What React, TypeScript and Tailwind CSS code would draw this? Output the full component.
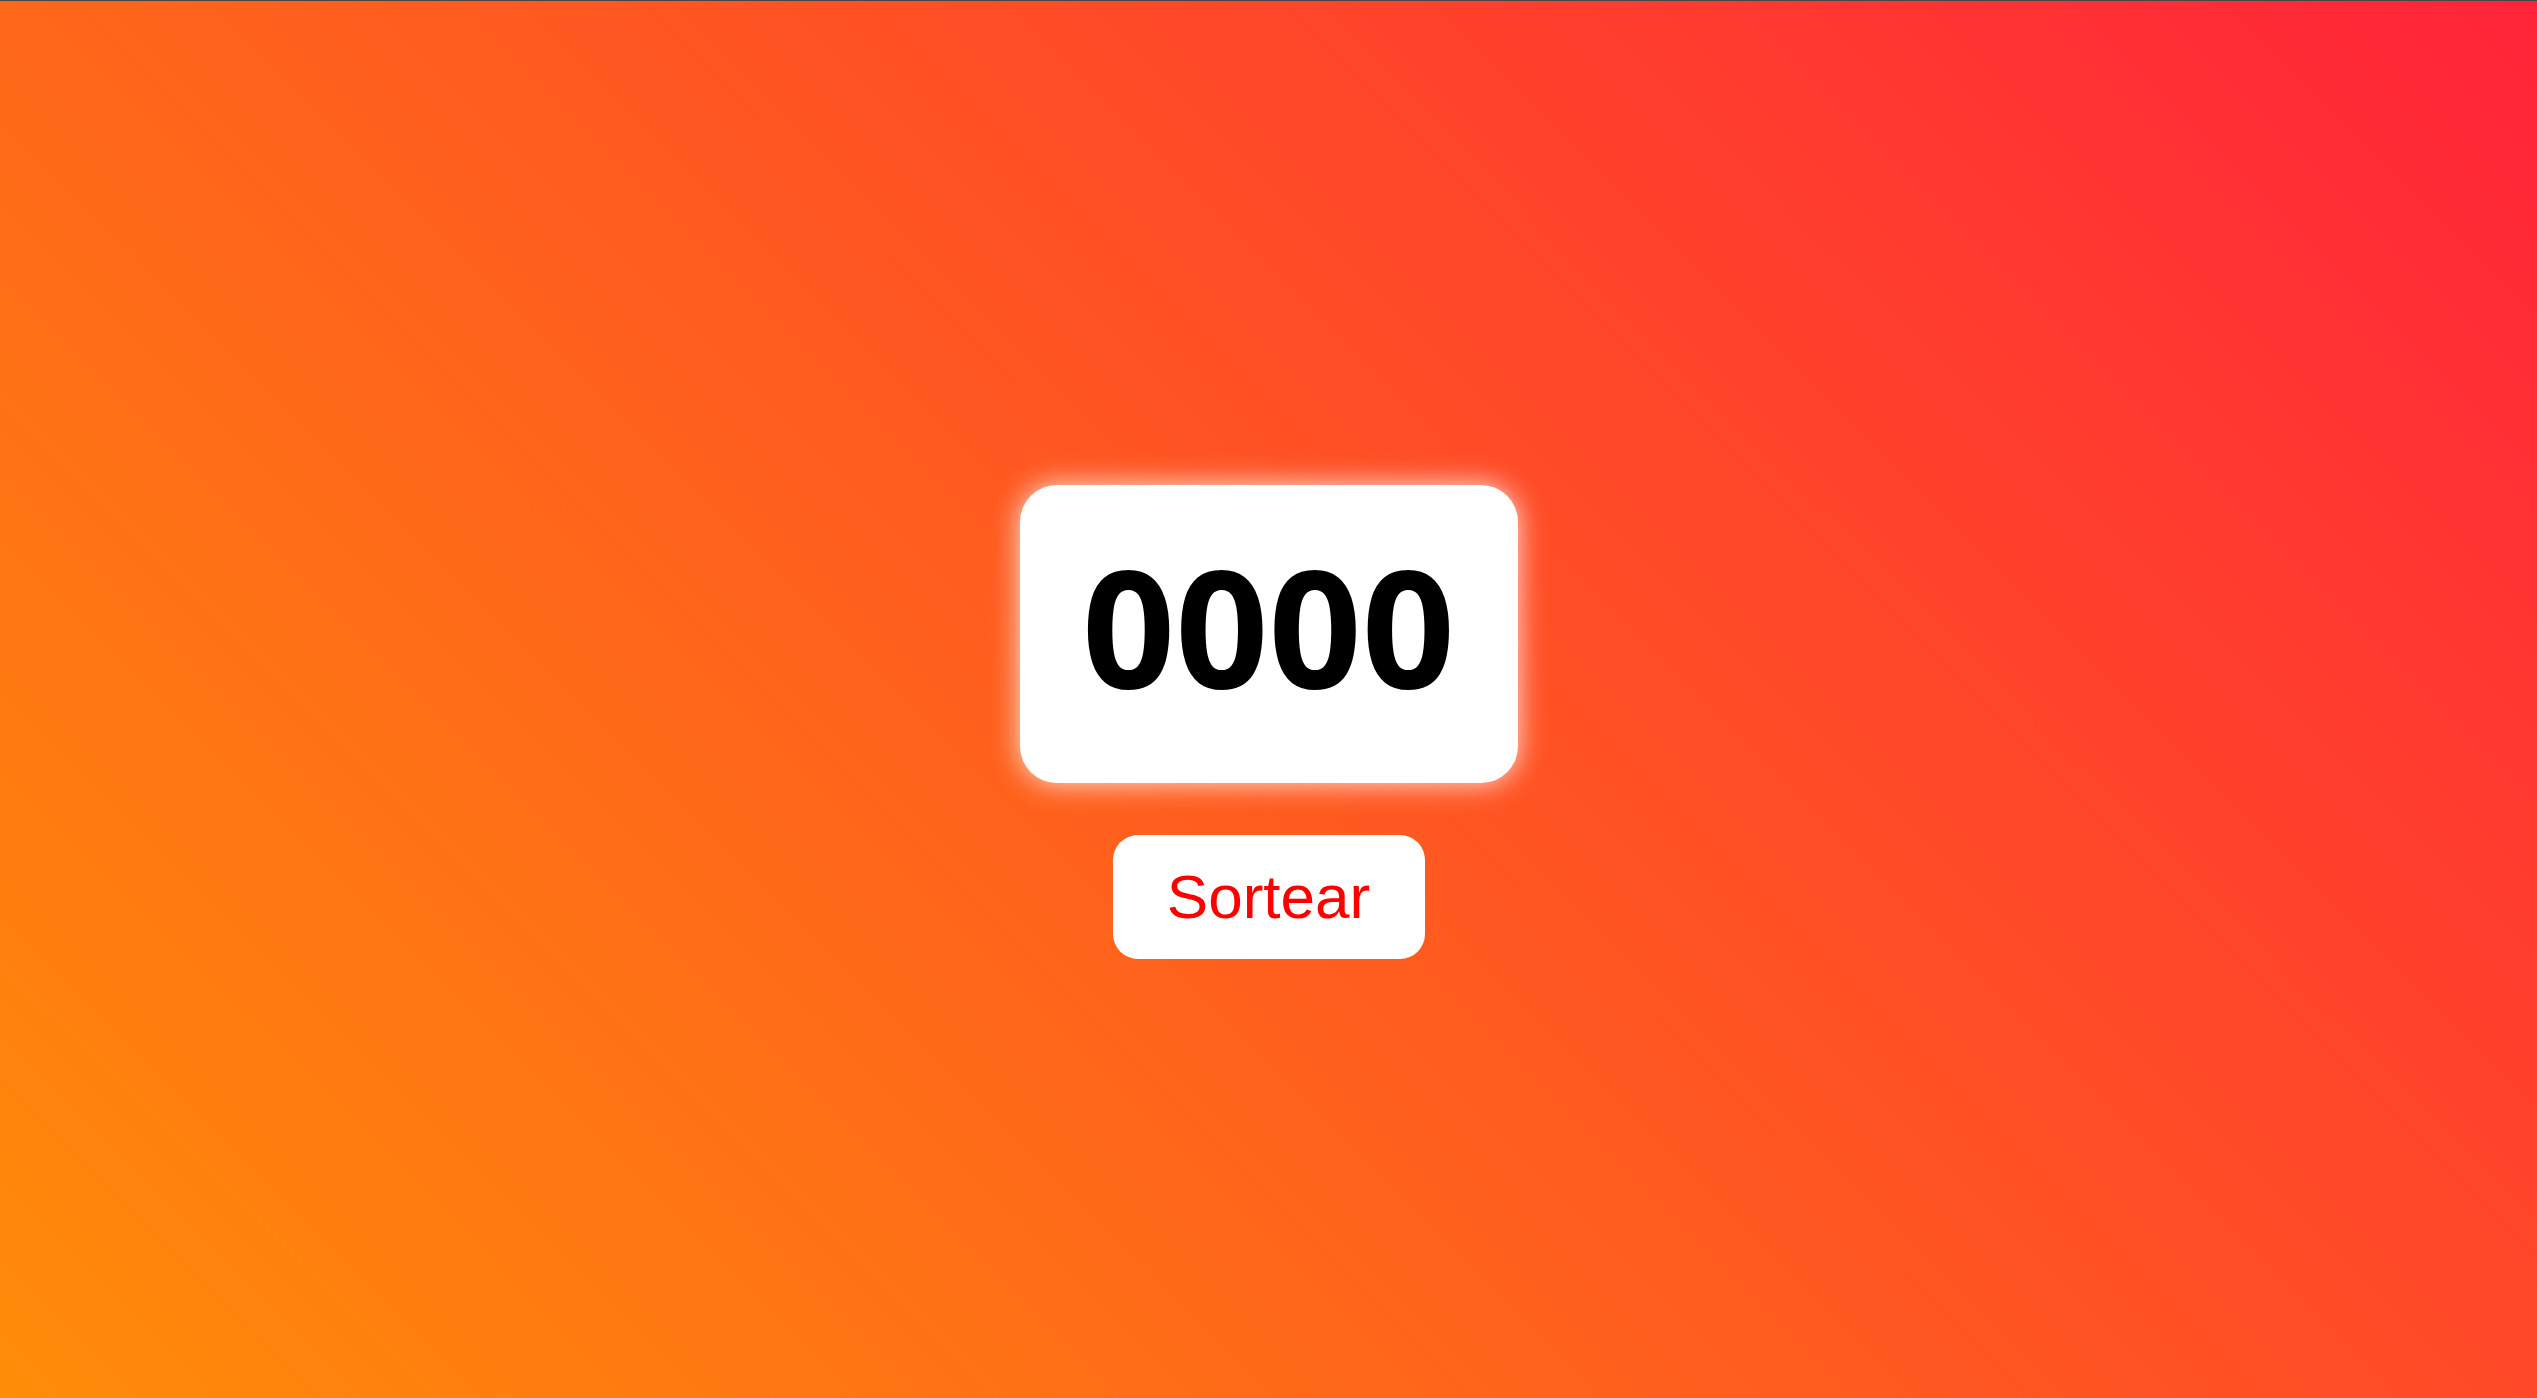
import { useState } from 'react';

export default function App() {
  const [numero, setNumero] = useState('0000');

  const sortear = () => {
    const n = Math.floor(Math.random() * 10000);
    setNumero(String(n).padStart(4, '0'));
  };

  return (
    <div className="min-h-screen w-full border-t border-[#474747] bg-[linear-gradient(45deg,#ff8c08,#ff2439)] flex flex-col items-center justify-center pt-[44px]">
      <div className="w-[498px] h-[298px] bg-white rounded-[37px] shadow-[0_0_28px_rgba(255,255,255,0.85)] flex items-center justify-center">
        <span
          className="text-[163px] font-bold text-black leading-none -mt-[17px]"
          style={{ fontFamily: '"Open Sans", "Noto Sans", sans-serif' }}
        >
          {numero}
        </span>
      </div>
      <button
        onClick={sortear}
        className="mt-[52px] w-[312px] h-[124px] bg-white rounded-[25px] text-[#ff0000] text-[62px] flex items-center justify-center"
        style={{ fontFamily: '"Liberation Sans", Arial, sans-serif' }}
      >
        Sortear
      </button>
    </div>
  );
}
